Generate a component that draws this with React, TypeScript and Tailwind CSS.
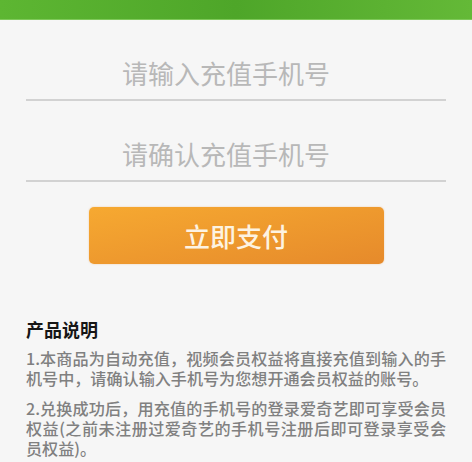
import React from "react"

const cjk = { fontFamily: '"Noto Sans CJK SC", "Noto Sans", sans-serif' }

function PhoneField({ placeholder }: { placeholder: string }) {
  return (
    <div className="pt-[25px]">
      <input
        type="tel"
        placeholder={placeholder}
        className="block h-[54px] w-full bg-transparent pr-[20px] text-center text-[26px] text-[#444] outline-none placeholder:text-[#b8b8b8]"
      />
      <div className="h-[2px] bg-[#d2d2d2]" />
    </div>
  )
}

export default function App() {
  return (
    <div className="min-h-[462px] w-full bg-[#f6f6f6]" style={cjk}>
      <div className="h-[20px] bg-gradient-to-r from-[#5db632] via-[#4ea629] to-[#64b937] border-b border-[#7fc95a]" />

      <div className="px-[26px]">
        <PhoneField placeholder="请输入充值手机号" />
        <PhoneField placeholder="请确认充值手机号" />
      </div>

      <div className="pt-[25px]">
        <button className="mx-auto flex h-[57px] w-[295px] items-center justify-center rounded-[5px] bg-gradient-to-br from-[#f6a931] to-[#e68a2b] text-[26px] font-medium text-[#fdf3e2] shadow-[0_0_2px_rgba(230,140,40,0.4)]">
          立即支付
        </button>
      </div>

      <div className="px-[26px] pt-[53px]">
        <h2 className="text-[18px] leading-[24px] font-bold text-[#161616]">产品说明</h2>
        <div className="mt-[7px] flex flex-col gap-[10px] text-[16.1px] leading-[20px] font-medium text-[#808080] text-justify">
          <p>1.本商品为自动充值，视频会员权益将直接充值到输入的手机号中，请确认输入手机号为您想开通会员权益的账号。</p>
          <p>2.兑换成功后，用充值的手机号的登录爱奇艺即可享受会员权益(之前未注册过爱奇艺的手机号注册后即可登录享受会员权益)。</p>
        </div>
      </div>
    </div>
  )
}
